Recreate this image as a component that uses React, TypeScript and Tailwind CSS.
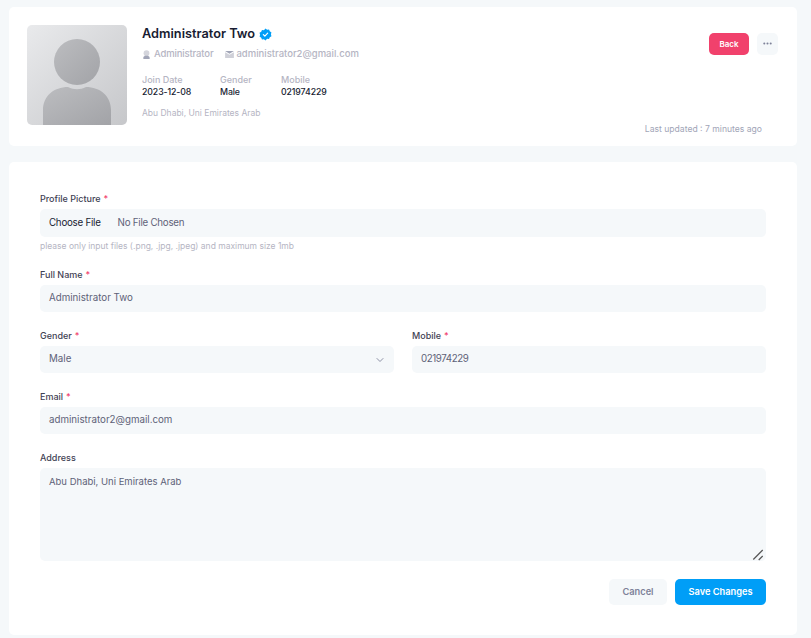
import { ChevronDown, Ellipsis } from 'lucide-react';

const inputClass = 'w-full h-[27px] flex items-center rounded-[5px] bg-[#f5f8fa] px-[9px] text-[9.75px] text-[#5e6278]';

function Label({ text, required }: { text: string; required?: boolean }) {
  return (
    <div className="h-[11px] mb-[5px] flex items-center text-[9px] font-medium text-[#3f4254]">
      {text}
      {required && <span className="ml-[3px] text-[#f1416c]">*</span>}
    </div>
  );
}

function Stat({ label, value, width }: { label: string; value: string; width: string }) {
  return (
    <div className={width}>
      <div className="text-[9px] leading-[13px] font-medium text-[#b5b5c3]">{label}</div>
      <div className="text-[8.75px] leading-[13px] font-medium text-[#181c32] tracking-[-0.1px]">{value}</div>
    </div>
  );
}

function Avatar() {
  return (
    <svg viewBox="0 0 100 100" className="w-[100px] h-[100px] rounded-[5px] shrink-0">
      <defs>
        <linearGradient id="bg" x1="0" y1="0" x2="1" y2="1">
          <stop offset="0" stopColor="#e9eaec" />
          <stop offset="1" stopColor="#c6c7ca" />
        </linearGradient>
        <linearGradient id="fg" x1="0" y1="0" x2="1" y2="1">
          <stop offset="0" stopColor="#bcbdc0" />
          <stop offset="1" stopColor="#a2a3a7" />
        </linearGradient>
      </defs>
      <rect width="100" height="100" fill="url(#bg)" />
      <circle cx="50" cy="37" r="23" fill="url(#fg)" />
      <path d="M16 100V85C16 71 27 62 41 62C47 65 53 65 59 62C73 62 84 71 84 85V100Z" fill="url(#fg)" />
    </svg>
  );
}

function Verified() {
  return (
    <svg viewBox="0 0 24 24" className="w-[13px] h-[13px] ml-[4px]">
      <path
        d="M12 1l2.9 2.2 3.6-.4 1.4 3.4 3.1 1.9-1 3.5 1 3.5-3.1 1.9-1.4 3.4-3.6-.4L12 23l-2.9-2.2-3.6.4-1.4-3.4L1 15.9l1-3.5-1-3.5 3.1-1.9 1.4-3.4 3.6.4z"
        fill="#009ef7"
      />
      <path d="M8 12.2l2.8 2.8L16 9.6" fill="none" stroke="#fff" strokeWidth="2.2" strokeLinecap="round" strokeLinejoin="round" />
    </svg>
  );
}

export default function App() {
  return (
    <div className="min-h-[638px] bg-[#f5f8fa] pl-[9px] pr-[14px] pt-[7px] font-['Inter',sans-serif]">
      {/* Profile header */}
      <div className="bg-white rounded-[5px] h-[139px] flex pl-[18px] pr-[19px] pt-[18px]">
        <Avatar />
        <div className="ml-[15px] flex-1">
          <div className="flex items-center h-[18px]">
            <span className="text-[12.75px] font-semibold text-[#181c32]">Administrator Two</span>
            <Verified />
          </div>
          <div className="flex items-center mt-[4px] h-[14px] text-[9.5px] font-medium text-[#b5b5c3]">
            <svg viewBox="0 0 10 10" className="w-[9px] h-[9px] mr-[3px]">
              <circle cx="5" cy="3.6" r="3.2" fill="#d4d5dc" />
              <path d="M1.5 10V8.6C1.5 7 3 6.4 5 6.4S8.5 7 8.5 8.6V10Z" fill="#a1a5b7" />
            </svg>
            <span className="tracking-[-0.15px]">Administrator</span>
            <svg viewBox="0 0 10 8" className="w-[9px] h-[7px] ml-[12px] mr-[2px]">
              <path d="M0 0H10L5 3Z" fill="#a1a5b7" />
              <path d="M0 1.4L5 4.4 10 1.4V8H0Z" fill="#cfd0d8" />
            </svg>
            administrator2@gmail.com
          </div>
          <div className="flex mt-[12px]">
            <Stat label="Join Date" value="2023-12-08" width="w-[78px]" />
            <Stat label="Gender" value="Male" width="w-[61px]" />
            <Stat label="Mobile" value="021974229" width="w-[80px]" />
          </div>
          <div className="mt-[8px] text-[8.5px] leading-[12px] text-[#b5b5c3]">Abu Dhabi, Uni Emirates Arab</div>
        </div>
        <div className="flex flex-col items-end pt-[8px]">
          <div className="flex gap-[8px]">
            <button className="w-[40px] h-[22px] rounded-[5px] bg-[#f1416c] text-white text-[8px] font-semibold">Back</button>
            <button className="w-[21px] h-[22px] rounded-[5px] bg-[#f5f8fa] flex items-center justify-center text-[#7e8299]">
              <Ellipsis size={11} strokeWidth={2.5} className="-translate-y-px" />
            </button>
          </div>
          <div className="mt-[68px] mr-[16px] text-[8.6px] leading-[12px] text-[#a1a5b7] whitespace-nowrap">Last updated : 7 minutes ago</div>
        </div>
      </div>

      {/* Edit form */}
      <div className="mt-[16px] bg-white rounded-[5px] h-[473px] px-[31px] pt-[31px]">
        <Label text="Profile Picture" required />
        <div className={`${inputClass} h-[28px] gap-[17px] text-[9.25px] tracking-[-0.25px]`}>
          <span className="text-[#181c32]">Choose File</span>
          <span>No File Chosen</span>
        </div>
        <div className="mt-[3px] h-[13px] leading-[13px] text-[8.5px] text-[#b5b5c3]">please only input files (.png, .jpg, .jpeg) and maximum size 1mb</div>

        <div className="mt-[16px]">
          <Label text="Full Name" required />
          <div className={inputClass}>Administrator Two</div>
        </div>

        <div className="mt-[18px] grid grid-cols-2 gap-x-[18px]">
          <div>
            <Label text="Gender" required />
            <div className={`${inputClass} justify-between`}>
              Male
              <ChevronDown size={12} strokeWidth={1.75} className="text-[#7e8299] -mr-[1px]" />
            </div>
          </div>
          <div>
            <Label text="Mobile" required />
            <div className={`${inputClass} tracking-[-0.4px]`}>021974229</div>
          </div>
        </div>

        <div className="mt-[18px]">
          <Label text="Email" required />
          <div className={inputClass}>administrator2@gmail.com</div>
        </div>

        <div className="mt-[18px]">
          <Label text="Address" />
          <div className="relative">
            <textarea
              readOnly
              defaultValue="Abu Dhabi, Uni Emirates Arab"
              className="block w-full h-[93px] resize-none rounded-[5px] bg-[#f5f8fa] px-[9px] py-[7px] text-[9.5px] text-[#5e6278] outline-none"
            />
            {/* resize grip */}
            <svg viewBox="0 0 12 12" className="absolute right-[2px] bottom-0 w-[12px] h-[12px]">
              <path d="M1.3 10.5L10.7 1M6.7 11L10.7 7" fill="none" stroke="#555" strokeWidth="1.2" />
            </svg>
          </div>
        </div>

        <div className="mt-[18px] flex justify-end gap-[8px]">
          <button className="w-[58px] h-[26px] rounded-[5px] bg-[#f5f8fa] text-[9.25px] font-semibold text-[#7e8299]">Cancel</button>
          <button className="w-[91px] h-[26px] rounded-[5px] bg-[#009ef7] text-[9.25px] font-semibold text-white">Save Changes</button>
        </div>
      </div>
    </div>
  );
}
